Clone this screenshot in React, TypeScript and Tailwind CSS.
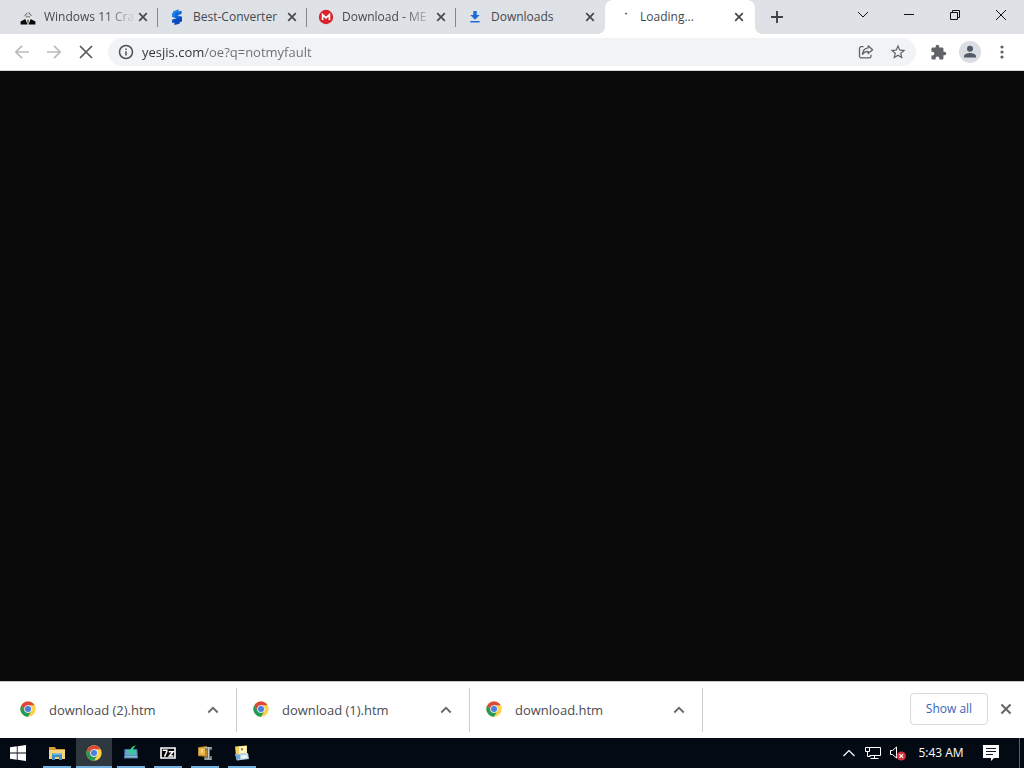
import React from "react";

type IconProps = { className?: string };

const CloseGlyph = ({ className = "" }: IconProps) => (
  <svg viewBox="0 0 10 10" className={className} fill="none" stroke="currentColor" strokeWidth="1.7" aria-hidden="true">
    <path d="M1.2 1.2l7.6 7.6M8.8 1.2L1.2 8.8" />
  </svg>
);

const ChevronUp = ({ className = "" }: IconProps) => (
  <svg viewBox="0 0 12 8" className={className} fill="none" stroke="currentColor" strokeWidth="1.8" aria-hidden="true">
    <path d="M1.3 6.5L6 1.8l4.7 4.7" />
  </svg>
);

const ChromeLogo = ({ className = "" }: IconProps) => (
  <svg viewBox="0 0 48 48" className={className} aria-hidden="true">
    <circle cx="24" cy="24" r="23" fill="#fcd24a" />
    <path d="M4.1 12.5L14 29.7 24 24V13h19.9A23 23 0 0 0 4.1 12.5z" fill="#d9483b" />
    <path d="M4.1 12.5L14 29.7A11.5 11.5 0 0 0 24 35.5 L24 47A23 23 0 0 1 4.1 12.5z" fill="#1f9a58" />
    <path d="M24 47L34 29.7A11.5 11.5 0 0 1 24 35.5z" fill="#1f9a58" />
    <circle cx="24" cy="24" r="11.5" fill="#e4ecf7" />
    <circle cx="24" cy="24" r="9" fill="#4a7fe0" />
  </svg>
);

const SuitIcon = () => (
  <svg viewBox="0 0 16 16" className="size-4" aria-hidden="true">
    <path d="M5.6 8L4.8 5.6 8 3.2l3 2.4-.8 2.4z" fill="#d4d8d9" />
    <path d="M4.6 7.2L7 4M8.5 3.2l3 3.6M6 8l4-.2" stroke="#5c6163" strokeWidth="1" fill="none" />
    <path d="M.6 15.6v-3.2L5.4 10l2.1 5.6zM15.4 15.6v-3.2L10.6 10l-2.1 5.6z" fill="#080909" />
    <path d="M5.6 9.8L8 15.6l2.4-5.8L8 8.6z" fill="#edf0f0" />
    <path d="M8 10.3l.8 1-.4 3.2-.4.8-.5-.8-.3-3.2z" fill="#4d5051" />
  </svg>
);

const ConverterIcon = () => (
  <svg viewBox="0 0 16 16" className="size-4" aria-hidden="true">
    <path d="M4 2.8L9.4.6v1.9l3.2-.8v3.2L8.4 6.2l4.6 1.6v4.4l-2.6 1v1.6l-4.8.9v-2.4l-2.4.4v-3l4.4-1.2L3 7.8V4.6l1-.3z" fill="#1265d8" />
    <path d="M7.6 9.5L13 7.8v4.4l-2.6 1v1.6l-4.8.9v-2.4l-2.4.4v-3z" fill="#0c4abd" />
    <path d="M4 2.8L9.4.6v1.9L6 4.4v2.9l-3 .5V4.6l1-.3z" fill="#1b82ed" />
  </svg>
);

const MegaIcon = () => (
  <svg viewBox="0 0 16 16" className="size-4" aria-hidden="true">
    <circle cx="8" cy="8" r="7.2" fill="#d9232e" />
    <path d="M4.6 11V5.6L8 8.8l3.4-3.2V11" fill="none" stroke="#fff" strokeWidth="1.7" />
  </svg>
);

const DownloadIcon = () => (
  <svg viewBox="0 0 16 16" className="size-4" fill="#1f6bd6" aria-hidden="true">
    <path d="M6.3 2h3.4v4h3L8 10.8 3.3 6h3zM3.3 12h9.4v1.5H3.3z" />
  </svg>
);

const Spinner = () => (
  <svg viewBox="0 0 16 16" className="size-4" aria-hidden="true">
    <path d="M9.3 4.2l1.6.8" stroke="#4b5568" strokeWidth="1.5" />
  </svg>
);

const tabs = [
  { title: "Windows 11 Cra", Icon: SuitIcon, fade: true, divider: true },
  { title: "Best-Converter", Icon: ConverterIcon, divider: true },
  { title: "Download - ME", Icon: MegaIcon, fade: true, divider: true },
  { title: "Downloads", Icon: DownloadIcon },
  { title: "Loading...", Icon: Spinner, active: true },
];

function TabStrip() {
  return (
    <header className="flex h-[34px] bg-[#dee1e6] pl-[9px]">
      <div role="tablist" className="flex min-w-0">
        {tabs.map(({ title, Icon, active, fade, divider }) => (
          <div
            key={title}
            role="tab"
            aria-selected={!!active}
            className={`relative flex min-w-0 items-center pl-[11px] text-[#45494d] ${active ? "w-[150px] rounded-t-lg bg-white pr-2" : "w-[149px] pr-[7px]"}`}
          >
            {active && (
              <>
                <span className="absolute -left-2 bottom-0 size-2 bg-[radial-gradient(circle_at_0_0,transparent_8px,white_8px)]" />
                <span className="absolute -right-2 bottom-0 size-2 bg-[radial-gradient(circle_at_100%_0,transparent_8px,white_8px)]" />
              </>
            )}
            <span className="shrink-0"><Icon /></span>
            <span className={`ml-2 min-w-0 flex-1 whitespace-nowrap text-[12px] leading-5 ${fade ? "[mask-image:linear-gradient(to_right,black_62px,transparent_92px)]" : ""}`}>
              {title}
            </span>
            <button aria-label={`Close ${title}`} className="grid size-4 shrink-0 place-items-center">
              <CloseGlyph className="size-[10px]" />
            </button>
            {divider && <span className="absolute right-0 top-2 h-[19px] w-px bg-[#85898e]" />}
          </div>
        ))}
      </div>
      <button aria-label="New tab" className="ml-2 grid w-7 place-items-center text-[#3f4246]">
        <svg viewBox="0 0 12 12" className="size-3" stroke="currentColor" strokeWidth="1.9" aria-hidden="true"><path d="M6 0v12M0 6h12" /></svg>
      </button>
      <div className="ml-auto flex h-[29px] text-[#111]">
        <button aria-label="Search tabs" className="grid w-[46px] place-items-center">
          <svg viewBox="0 0 12 12" className="size-3" fill="none" stroke="currentColor" strokeWidth="1" aria-hidden="true"><path d="M1 3l5 5 5-5" /></svg>
        </button>
        <button aria-label="Minimize" className="grid w-[46px] place-items-center">
          <svg viewBox="0 0 10 10" className="size-[10px]" stroke="currentColor" aria-hidden="true"><path d="M0 4.5h10" /></svg>
        </button>
        <button aria-label="Restore" className="grid w-[46px] place-items-center">
          <svg viewBox="0 0 10 10" className="size-[10px]" fill="none" stroke="currentColor" aria-hidden="true"><path d="M.5 2.5h7v7h-7zM2.5 2.5v-2h7v7h-2" /></svg>
        </button>
        <button aria-label="Close window" className="grid w-[46px] place-items-center">
          <svg viewBox="0 0 10 10" className="size-[10px]" stroke="currentColor" aria-hidden="true"><path d="M0 0l10 10M10 0L0 10" /></svg>
        </button>
      </div>
    </header>
  );
}

function Toolbar() {
  const button = "grid size-7 shrink-0 place-items-center";
  return (
    <nav className="flex h-[37px] items-center gap-1 border-b border-[#d4d6d8] bg-white px-2 text-[#5f6368]">
      <button aria-label="Back" className={`${button} text-[#b9bbbd]`}>
        <svg viewBox="0 0 16 16" className="size-4" fill="none" stroke="currentColor" strokeWidth="1.7" aria-hidden="true"><path d="M15 8H2M8 1.8L1.8 8 8 14.2" /></svg>
      </button>
      <button aria-label="Forward" className={`${button} text-[#b9bbbd]`}>
        <svg viewBox="0 0 16 16" className="size-4" fill="none" stroke="currentColor" strokeWidth="1.7" aria-hidden="true"><path d="M1 8h13M8 1.8L14.2 8 8 14.2" /></svg>
      </button>
      <button aria-label="Stop loading" className={`${button} text-[#54575b]`}>
        <svg viewBox="0 0 14 14" className="size-[14px]" stroke="currentColor" strokeWidth="1.7" aria-hidden="true"><path d="M1 1l12 12M13 1L1 13" /></svg>
      </button>
      <div className="mx-1 flex h-7 min-w-0 flex-1 items-center gap-1 rounded-full bg-[#f1f3f4] pl-2.5 pr-1">
        <button aria-label="View site information" className="shrink-0">
          <svg viewBox="0 0 16 16" className="size-4" fill="none" stroke="#4f5357" strokeWidth="1.5" aria-hidden="true"><circle cx="8" cy="8" r="6.5" /><path d="M8 7.2v4.3M8 4.4V6" /></svg>
        </button>
        <input
          aria-label="Address and search bar"
          defaultValue="yesjis.com/oe?q=notmyfault"
          className="ml-1 min-w-0 flex-1 bg-[linear-gradient(to_right,#303336_62px,#6a6e73_62px)] bg-clip-text text-[13px] leading-6 text-transparent caret-black outline-none"
        />
        <button aria-label="Share this page" className={button}>
          <svg viewBox="0 0 16 16" className="size-4" fill="none" stroke="currentColor" strokeWidth="1.3" strokeLinejoin="round" aria-hidden="true">
            <path d="M5.5 2.6H3.2A1.7 1.7 0 0 0 1.5 4.3v7.9a1.7 1.7 0 0 0 1.7 1.7h8.1a1.7 1.7 0 0 0 1.7-1.7v-1.4" />
            <path d="M10.2 1.8l4.4 3.9-4.4 3.8V7.4C7.6 7.4 5.7 8.3 4.4 10.3c.3-3.3 2.3-6.1 5.8-6.5z" />
          </svg>
        </button>
        <button aria-label="Bookmark this page" className={button}>
          <svg viewBox="0 0 24 24" className="size-[18px]" fill="currentColor" aria-hidden="true"><path d="M22 9.24l-7.19-.62L12 2 9.19 8.63 2 9.24l5.46 4.73L5.82 21 12 17.27 18.18 21l-1.63-7.03L22 9.24zM12 15.4l-3.76 2.27 1-4.28-3.32-2.88 4.38-.38L12 6.1l1.71 4.04 4.38.38-3.32 2.88 1 4.28L12 15.4z" /></svg>
        </button>
      </div>
      <button aria-label="Extensions" className={button}>
        <svg viewBox="0 0 24 24" className="size-[17px]" fill="currentColor" aria-hidden="true"><path d="M20.5 11H19V7c0-1.1-.9-2-2-2h-4V3.5a2.5 2.5 0 0 0-5 0V5H4c-1.1 0-2 .9-2 2v3.8h1.5a2.7 2.7 0 0 1 0 5.4H2V20c0 1.1.9 2 2 2h3.8v-1.5a2.7 2.7 0 0 1 5.4 0V22H17c1.1 0 2-.9 2-2v-4h1.5a2.5 2.5 0 0 0 0-5z" /></svg>
      </button>
      <button aria-label="Profile" className={button}>
        <svg viewBox="0 0 22 22" className="size-[22px]" aria-hidden="true"><circle cx="11" cy="11" r="11" fill="#dadde2" /><circle cx="11" cy="7.8" r="3" fill="#505967" /><path d="M5 16.5v-1.3c0-2.2 4-3.2 6-3.2s6 1 6 3.2v1.3z" fill="#505967" /></svg>
      </button>
      <button aria-label="Customize and control" className={button}>
        <svg viewBox="0 0 4 14" className="h-[14px] w-1" fill="currentColor" aria-hidden="true"><circle cx="2" cy="2" r="1.6" /><circle cx="2" cy="7" r="1.6" /><circle cx="2" cy="12" r="1.6" /></svg>
      </button>
    </nav>
  );
}

function DownloadShelf() {
  return (
    <section aria-label="Downloads" className="flex h-[57px] items-center border-t border-[#c4c6c8] bg-white pl-1">
      {["download (2).htm", "download (1).htm", "download.htm"].map((name) => (
        <div key={name} className="flex h-11 w-[233px] min-w-0 items-center border-r border-[#cbcdd0] pl-4 pr-[11px]">
          <ChromeLogo className="mb-0.5 size-4 shrink-0" />
          <a href="#" className="ml-[13px] min-w-0 flex-1 truncate text-[13px] leading-5 text-[#4a4d51]">{name}</a>
          <button aria-label={`Options for ${name}`} className="grid size-6 shrink-0 place-items-center text-[#65696d]">
            <ChevronUp className="h-2 w-3" />
          </button>
        </div>
      ))}
      <button className="mb-0.5 ml-auto h-8 w-[78px] shrink-0 rounded border border-[#d6d8dc] text-[12px] font-medium text-[#3564bd]">Show all</button>
      <button aria-label="Close downloads bar" className="mx-1.5 mb-0.5 grid size-6 shrink-0 place-items-center text-[#64686c]">
        <CloseGlyph className="size-3" />
      </button>
    </section>
  );
}

const ExplorerIcon = () => (
  <svg viewBox="0 0 18 18" className="size-[18px]" aria-hidden="true">
    <path d="M1 3h6l1 2h9v3H1z" fill="#d99e36" />
    <path d="M1 6h16v9H1z" fill="#f6d47b" />
    <path d="M4 16V9.5h10V16h-3v-3H7v3z" fill="#3e8fc3" />
    <path d="M4.5 9.5h9v1.2h-9z" fill="#82c3e2" />
  </svg>
);

const InstallIcon = () => (
  <svg viewBox="0 0 16 16" className="size-4" aria-hidden="true">
    <path d="M1.5 4h12.8l.7 9.5H1z" fill="#3f7ba6" />
    <path d="M2.4 5h11l.4 5.5H2z" fill="#6aa6cb" />
    <path d="M1.8 11.2h12.4v1.2H1.8z" fill="#a9c9dc" />
    <path d="M13 .6C9.4 1 7.5 3 7.3 5.5L4.9 5.4l3.6 5 4-4.4-2.3-.1C10 3.8 11 2.3 13 .6z" fill="#2bd587" />
  </svg>
);

const SevenZipIcon = () => (
  <svg viewBox="0 0 16 12" className="h-3 w-4" aria-hidden="true">
    <path d="M1 1h14v10H1z" fill="#050505" stroke="#fff" strokeWidth="1.6" />
    <path d="M2.6 3.3h4.2v1.4L4.5 9.6M8.8 4.8h4.2L9.4 9h4" fill="none" stroke="#fff" strokeWidth="1.5" />
  </svg>
);

const ArchiveIcon = () => (
  <svg viewBox="0 0 16 16" className="size-4" aria-hidden="true">
    <path d="M1 2.2L10 1v11L1 11z" fill="#be842e" />
    <path d="M2 3l6-.7v8.2L2 9.8z" fill="#e6b64e" />
    <path d="M4 4.2h2v3.5H4z" fill="#f7dc81" />
    <path d="M8 2h7v3h-2v6h2v4H7v-3h3V5H8z" fill="#6d7476" />
    <path d="M11.5 2v12M8 2.8h6.5M8 14h6.5" stroke="#c2c8c8" strokeWidth="1" />
  </svg>
);

const InstallerIcon = () => (
  <svg viewBox="0 0 16 16" className="size-4" aria-hidden="true">
    <path d="M1 1.5L13 .5v10L2 11z" fill="#f0d35d" />
    <path d="M5 1.5l7.5-.6v7L5 8.5z" fill="#fff5c5" />
    <path d="M1 9l13-1 1 6-12 1.4z" fill="#b5d3e3" />
    <path d="M7 10.5l6-.5.5 3-6 .8z" fill="#f3f7fa" />
    <path d="M1.4 9l4.6 1v4l-3.6 1z" fill="#72a7cd" />
    <path d="M7 3.2h2v2H7z" fill="#a17524" />
  </svg>
);

const apps = [
  { name: "File Explorer", icon: <ExplorerIcon /> },
  { name: "Google Chrome", icon: <ChromeLogo className="size-4" />, active: true },
  { name: "Installer", icon: <InstallIcon /> },
  { name: "7-Zip", icon: <SevenZipIcon /> },
  { name: "Archive Manager", icon: <ArchiveIcon /> },
  { name: "Setup", icon: <InstallerIcon /> },
];

function Taskbar() {
  return (
    <footer className="flex h-[30px] bg-[#030a13] text-white">
      <button aria-label="Start" className="mr-[3px] grid w-9 place-items-center">
        <svg viewBox="0 0 16 16" className="size-4" fill="#fff" aria-hidden="true"><path d="M0 2.3l6.8-1v6.3H0zM7.6 1.2L16 0v7.6H7.6zM0 8.4h6.8v6.3l-6.8-1zM7.6 8.4H16V16l-8.4-1.2z" /></svg>
      </button>
      <div className="flex gap-px">
        {apps.map(({ name, icon, active }) => (
          <button key={name} aria-label={name} className={`flex w-9 flex-col items-center ${active ? "bg-[#30383f]" : ""}`}>
            <span className="grid flex-1 place-items-center pt-0.5">{icon}</span>
            <span className={`h-0.5 bg-[#72b1df] ${active ? "w-full" : "w-7"}`} />
          </button>
        ))}
      </div>
      <div className="ml-auto flex items-center">
        <button aria-label="Show hidden icons" className="grid size-6 place-items-center">
          <svg viewBox="0 0 12 8" className="h-2 w-3" fill="none" stroke="currentColor" strokeWidth="1.2" aria-hidden="true"><path d="M.5 7L6 1.5 11.5 7" /></svg>
        </button>
        <button aria-label="Network" className="grid size-6 place-items-center">
          <svg viewBox="0 0 16 14" className="h-[14px] w-4" fill="none" stroke="currentColor" aria-hidden="true"><path d="M4.5 1.5h11v8h-11M9.5 9.5v3M5.5 12.5h8M.5 1.5h4v4h-4zM2.5 5.5v5h3" /></svg>
        </button>
        <button aria-label="Volume muted" className="grid size-6 place-items-center">
          <svg viewBox="0 0 18 16" className="h-4 w-[18px]" fill="none" aria-hidden="true"><path d="M2.5 5.5h2l4-3.5v11l-4-3.5h-2z" stroke="#fff" /><circle cx="13.3" cy="11" r="4.6" fill="#d92c3d" /><path d="M11.4 9.1l3.8 3.8M15.2 9.1l-3.8 3.8" stroke="#fff" strokeWidth="1.2" /></svg>
        </button>
        <button className="w-16 text-[12px] leading-5">5:43 AM</button>
        <button aria-label="Notifications" className="grid w-9 place-items-center">
          <svg viewBox="0 0 16 16" className="size-4" aria-hidden="true"><path d="M0 0h16v13h-5l-3 3v-3H0z" fill="#fff" /><path d="M3 3.5h10M3 6.5h10M3 9.5h7" stroke="#111820" /></svg>
        </button>
        <button aria-label="Show desktop" className="ml-2.5 h-[30px] w-[5px] border-l border-[#53606b]" />
      </div>
    </footer>
  );
}

export default function App() {
  return (
    <div className="flex min-h-screen flex-col bg-[#090909] font-['Open_Sans','Noto_Sans',sans-serif]">
      <TabStrip />
      <Toolbar />
      <main className="flex-1 bg-[#090909]" />
      <DownloadShelf />
      <Taskbar />
    </div>
  );
}
